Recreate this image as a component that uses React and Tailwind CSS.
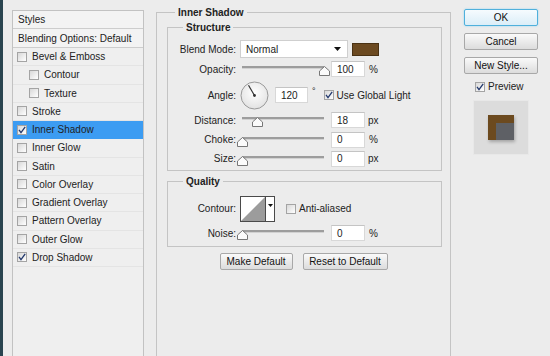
import React from 'react';

const font = { fontFamily: '"Liberation Sans", Arial, sans-serif' };

function Check({ checked }) {
  return (
    <span className="w-[10px] h-[10px] shrink-0 border border-[#a4a4a4] bg-linear-to-br from-[#d8d8d8] to-white flex items-center justify-center">
      {checked && (
        <svg width="8" height="8" viewBox="0 0 8 8">
          <path d="M1 3.8 L3 6.6 L7.2 0.8" stroke="#243a6e" strokeWidth="1.3" fill="none" />
        </svg>
      )}
    </span>
  );
}

function Btn({ children, w, primary }) {
  return (
    <div
      className={`h-[17px] ${w} rounded-[2px] border flex items-center justify-center text-[10px] text-[#111] ${
        primary
          ? 'border-[#4fb0dc] bg-linear-to-b from-[#f6fbfe] to-[#dbeef8] shadow-[0_0_2px_#8fd0f0]'
          : 'border-[#a8a8a8] bg-linear-to-b from-[#fafafa] to-[#dcdcdc]'
      }`}
    >
      {children}
    </div>
  );
}

function Slider({ pos }) {
  return (
    <div className="relative w-[94px] h-full">
      <div className="absolute left-[5px] right-[7px] top-1/2 -mt-[3px] h-[3px] bg-[#9d9d9d] border-b border-[#d2d2d2]" />
      <svg
        className="absolute top-1/2 -mt-[3px]"
        style={{ left: pos - 5 }}
        width="11"
        height="10"
        viewBox="0 0 11 10"
      >
        <polygon points="5.5,0.5 10.5,5 10.5,9.5 0.5,9.5 0.5,5" fill="#fbfbfb" stroke="#777" />
      </svg>
    </div>
  );
}

function Field({ value, w = 'w-[34px]' }) {
  return (
    <div className={`${w} h-[16px] bg-white border border-[#d8d8d8] border-t-[#c4c4c4] pl-[5px] flex items-center text-[10px]`}>
      {value}
    </div>
  );
}

function Row({ label, h, children }) {
  return (
    <div className={`flex items-center ${h}`}>
      <div className="w-[69px] text-right pr-[1px] text-[10px]">{label}</div>
      <div className="flex items-center h-full">{children}</div>
    </div>
  );
}

const styles = [
  ['Bevel & Emboss', false, false],
  ['Contour', false, true],
  ['Texture', false, true],
  ['Stroke', false, false],
  ['Inner Shadow', true, false, true],
  ['Inner Glow', false, false],
  ['Satin', false, false],
  ['Color Overlay', false, false],
  ['Gradient Overlay', false, false],
  ['Pattern Overlay', false, false],
  ['Outer Glow', false, false],
  ['Drop Shadow', true, false],
];

export default function App() {
  return (
    <div style={font} className="w-[550px] h-[356px] overflow-hidden bg-[#ececec] flex text-[#222]">
      <div className="w-[3px] bg-[#29444f] shrink-0" />

      {/* styles list */}
      <div className="w-[141px] pl-[9px] pt-[10px] shrink-0">
        <div className="w-[132px] h-[400px] border border-[#c2c2c2] bg-[#efefef]">
          <div className="h-[18px] flex items-center pl-[5px] text-[10px] border-b border-[#cdcdcd] bg-[#f3f3f3]">
            Styles
          </div>
          <div className="h-[19px] flex items-center pl-[5px] text-[10px] border-b border-[#cdcdcd] bg-[#f3f3f3]">
            Blending Options: Default
          </div>
          {styles.map(([name, checked, sub, active]) => (
            <div
              key={name}
              className={`h-[18.25px] flex items-center gap-[5px] text-[10px] border-b ${
                sub ? 'pl-[16px]' : 'pl-[4px]'
              } ${active ? 'bg-[#3c9cf2] border-[#3c9cf2]' : 'border-[#e4e4e4]'}`}
            >
              <Check checked={checked} />
              <span>{name}</span>
            </div>
          ))}
        </div>
      </div>

      {/* settings */}
      <div className="w-[307px] pl-[12px] pt-[6px] shrink-0">
        <fieldset className="w-[295px] h-[400px] border border-[#c4c4c4] px-0">
          <legend className="ml-[18px] px-[3px] text-[10px] font-bold leading-[13px]">Inner Shadow</legend>

          <fieldset className="ml-[10px] w-[275px] mt-[2px] border border-[#c4c4c4] px-0 pb-[2px] pt-[6px]">
            <legend className="ml-[15px] px-[3px] text-[10px] font-bold leading-[13px]">Structure</legend>

            <Row label="Blend Mode:" h="h-[18px]">
              <div className="ml-[3px] w-[108px] h-[18px] bg-white border border-[#cfcfcf] flex items-center justify-between pl-[5px] pr-[6px] text-[10px]">
                Normal
                <svg width="7" height="4" viewBox="0 0 7 4">
                  <polygon points="0,0 7,0 3.5,4" fill="#111" />
                </svg>
              </div>
              <div className="ml-[4px] w-[27px] h-[13px] bg-[#6c4a21] border border-[#4a3214]" />
            </Row>

            <Row label="Opacity:" h="h-[22px]">
              <Slider pos={87} />
              <Field value="100" />
              <span className="ml-[4px] text-[10px]">%</span>
            </Row>

            <Row label="Angle:" h="h-[30px]">
              <svg className="ml-[3px]" width="29" height="29" viewBox="0 0 29 29">
                <defs>
                  <radialGradient id="dial" cx="0.5" cy="0.4" r="0.6">
                    <stop offset="0" stopColor="#ffffff" />
                    <stop offset="1" stopColor="#e2e2e2" />
                  </radialGradient>
                </defs>
                <circle cx="14.5" cy="14.5" r="13.5" fill="url(#dial)" stroke="#9a9a9a" />
                <line x1="14.5" y1="14.5" x2="8.5" y2="4.2" stroke="#333" strokeWidth="1.2" />
                <circle cx="14.5" cy="14.5" r="1.4" fill="#333" />
              </svg>
              <div className="ml-[6px]">
                <Field value="120" w="w-[33px]" />
              </div>
              <span className="ml-[4px] text-[9px] -mt-[6px]">°</span>
              <div className="ml-[8px] flex items-center gap-[3px] text-[10px]">
                <Check checked />
                Use Global Light
              </div>
            </Row>

            <Row label="Distance:" h="h-[20px]">
              <Slider pos={20} />
              <Field value="18" />
              <span className="ml-[3px] text-[10px]">px</span>
            </Row>
            <Row label="Choke:" h="h-[19px]">
              <Slider pos={5} />
              <Field value="0" />
              <span className="ml-[4px] text-[10px]">%</span>
            </Row>
            <Row label="Size:" h="h-[19px]">
              <Slider pos={5} />
              <Field value="0" />
              <span className="ml-[3px] text-[10px]">px</span>
            </Row>
          </fieldset>

          <fieldset className="ml-[10px] w-[275px] mt-[4px] border border-[#c4c4c4] px-0 pb-[3px] pt-[6px]">
            <legend className="ml-[15px] px-[3px] text-[10px] font-bold leading-[13px]">Quality</legend>

            <Row label="Contour:" h="h-[29px]">
              <div className="ml-[3px] w-[35px] h-[26px] border border-[#4a4a4a] flex bg-white">
                <svg width="24" height="24" viewBox="0 0 24 24">
                  <polygon points="0,24 24,0 24,24" fill="#9c9c9c" />
                </svg>
                <div className="flex-1 border-l border-[#4a4a4a] flex items-start justify-center pt-[7px]">
                  <svg width="5" height="3" viewBox="0 0 5 3">
                    <polygon points="0,0 5,0 2.5,3" fill="#111" />
                  </svg>
                </div>
              </div>
              <div className="ml-[11px] flex items-center gap-[3px] text-[10px]">
                <Check />
                Anti-aliased
              </div>
            </Row>

            <Row label="Noise:" h="h-[20px]">
              <Slider pos={5} />
              <Field value="0" />
              <span className="ml-[4px] text-[10px]">%</span>
            </Row>
          </fieldset>

          <div className="mt-[6px] flex justify-center gap-[10px]">
            <Btn w="w-[73px]">Make Default</Btn>
            <Btn w="w-[85px]">Reset to Default</Btn>
          </div>
        </fieldset>
      </div>

      {/* buttons */}
      <div className="flex-1 pl-[13px] pt-[9px] flex flex-col">
        <div className="flex flex-col gap-[7px]">
          <Btn w="w-[74px]" primary>OK</Btn>
          <Btn w="w-[74px]">Cancel</Btn>
          <Btn w="w-[74px]">New Style...</Btn>
        </div>
        <div className="mt-[5px] ml-[11px] flex items-center gap-[3px] text-[10px]">
          <Check checked />
          Preview
        </div>
        <div className="mt-[6px] ml-[9px] w-[56px] h-[55px] bg-[#dcdcdc] border border-[#e8e8e8] flex items-center justify-center">
          <div className="w-[26px] h-[25px] bg-[#6c4a1f] flex items-end justify-end shadow-[1px_2px_3px_rgba(0,0,0,0.25)]">
            <div className="w-[18px] h-[17px] bg-[#5e6065]" />
          </div>
        </div>
      </div>
    </div>
  );
}
